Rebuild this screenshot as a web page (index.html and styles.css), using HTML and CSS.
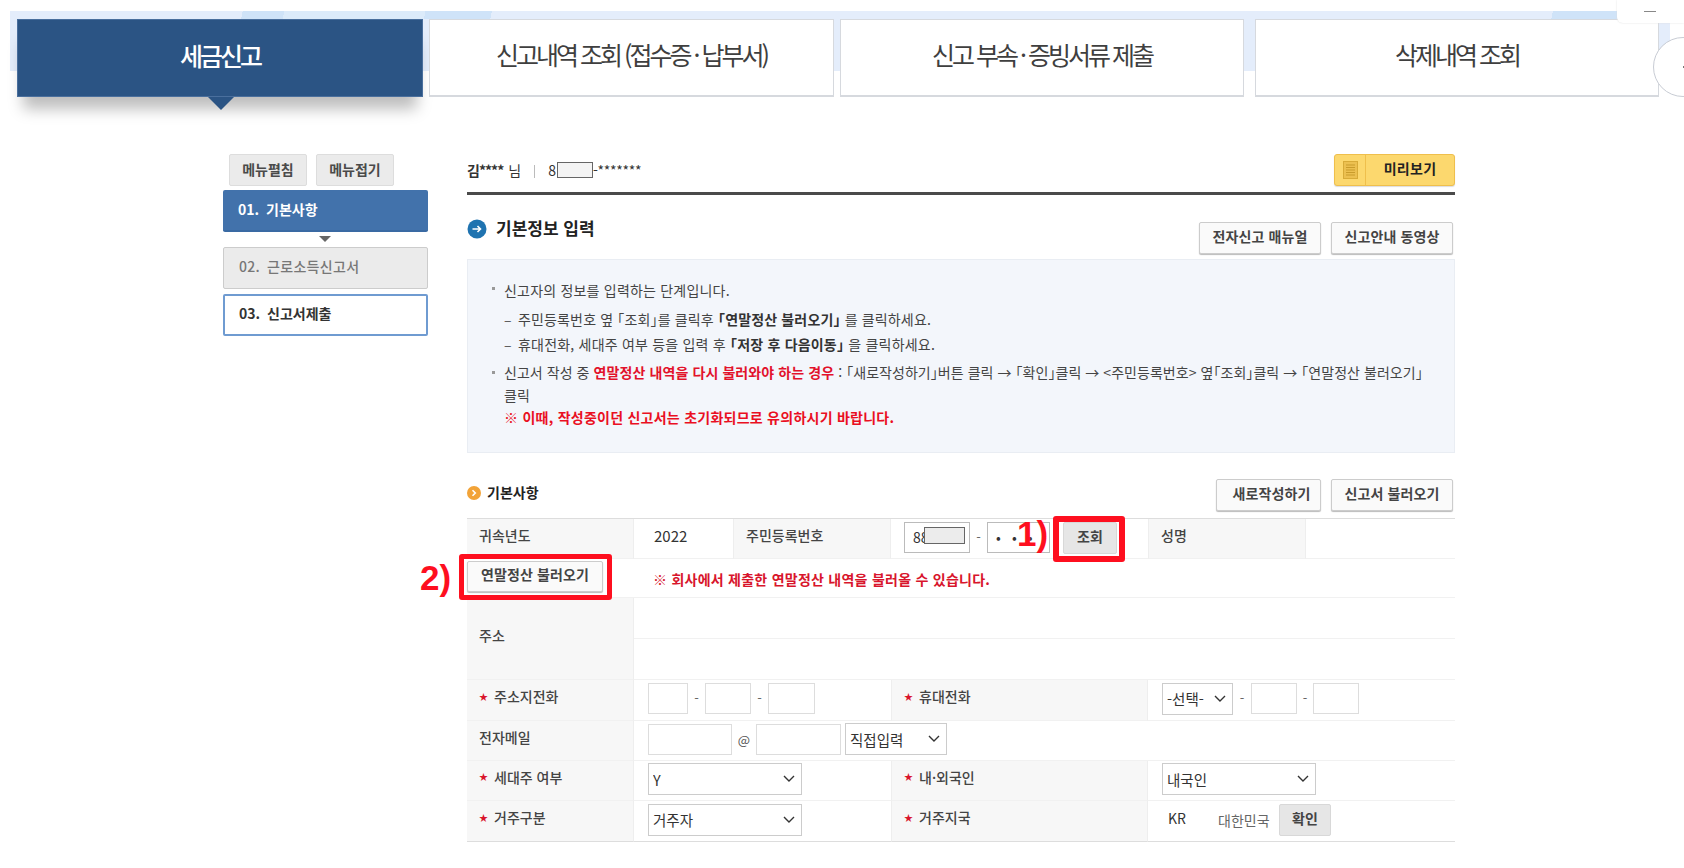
FILE: index.html
```html
<!DOCTYPE html>
<html lang="ko">
<head>
<meta charset="utf-8">
<title>세금신고</title>
<link rel="stylesheet" href="styles.css">
</head>
<body>
<div class="page">
  <div class="float-min"><span class="min-bar"></span></div>
  <div class="float-circle"><span class="circle-dot"></span></div>
  <nav class="tabs">
    <a class="tab tab-active">세금신고</a>
    <a class="tab tab-two">신고내역 조회 (접수증 · 납부서)</a>
    <a class="tab tab-three">신고 부속 · 증빙서류 제출</a>
    <a class="tab tab-four">삭제내역 조회</a>
  </nav>
  <div class="content">
    <aside class="side">
      <div class="side-btns">
        <button class="side-btn">메뉴펼침</button>
        <button class="side-btn">메뉴접기</button>
      </div>
      <div class="step step-on"><span class="num">01.</span>기본사항</div>
      <div class="step-arrow"></div>
      <div class="step step-off"><span class="num">02.</span>근로소득신고서</div>
      <div class="step step-next"><span class="num">03.</span>신고서제출</div>
    </aside>
    <main class="main">
      <div class="user-row">
        <div class="user">
          <b>김****</b><span class="user-nim">님</span><span class="user-sep"></span><span>8</span><span class="mask mask-user"></span><span class="user-stars">-*******</span>
        </div>
        <button class="preview">
          <span class="preview-icon">
            <svg width="15" height="18" viewBox="0 0 15 18"><rect x="0.5" y="0.5" width="14" height="17" fill="#ecc050" stroke="#d8ab38"/><path d="M3 4h9M3 6.5h9M3 9h9M3 11.5h9M3 14h9" stroke="#c99c2c" stroke-width="1"/></svg>
          </span>
          <span class="preview-text">미리보기</span>
        </button>
      </div>
      <div class="head-row">
        <h2 class="head">
          <svg class="head-icon" width="20" height="20" viewBox="0 0 20 20"><circle cx="10" cy="10" r="9.5" fill="#1f73b0"/><path d="M5.5 10h8M10.5 7l3 3-3 3" fill="none" stroke="#fff" stroke-width="1.6"/></svg>
          <span class="head-text">기본정보 입력</span>
        </h2>
        <div class="btn-group">
          <button class="btn">전자신고 매뉴얼</button>
          <button class="btn">신고안내 동영상</button>
        </div>
      </div>
      <section class="info">
        <p class="line"><span class="bullet"></span>신고자의 정보를 입력하는 단계입니다.</p>
        <p class="line line-dash line-second">주민등록번호 옆 ｢조회｣를 클릭후 <b>｢연말정산 불러오기｣</b> 를 클릭하세요.</p>
        <p class="line line-dash line-third">휴대전화, 세대주 여부 등을 입력 후 <b>｢저장 후 다음이동｣</b> 을 클릭하세요.</p>
        <p class="line line-tight"><span class="bullet"></span>신고서 작성 중 <b class="red">연말정산 내역을 다시 불러와야 하는 경우</b> : ｢새로작성하기｣버튼 클릭 → ｢확인｣클릭 → &lt;주민등록번호&gt; 옆｢조회｣클릭 → ｢연말정산 불러오기｣<br>클릭<br><b class="red-bright">※ 이때, 작성중이던 신고서는 초기화되므로 유의하시기 바랍니다.</b></p>
      </section>
      <div class="sub-row">
        <h3 class="sub">
          <svg class="sub-icon" width="14" height="14" viewBox="0 0 14 14"><circle cx="7" cy="7" r="7" fill="#f2a338"/><path d="M5.5 4.2 8.3 7l-2.8 2.8" fill="none" stroke="#fff" stroke-width="1.6"/></svg>
          <span class="sub-text">기본사항</span>
        </h3>
        <div class="btn-group">
          <button class="btn btn-narrow">새로작성하기</button>
          <button class="btn">신고서 불러오기</button>
        </div>
      </div>
      <div class="form">
        <div class="cell label">귀속년도</div>
        <div class="cell val-year">2022</div>
        <div class="cell label label-in">주민등록번호</div>
        <div class="cell val val-rrn">
          <div class="field f-rrn1">88<span class="mask mask-rrn"></span></div>
          <span class="dash d17">-</span>
          <div class="field f-rrn2">• • •</div>
          <button class="btn-gray btn-lookup">조회</button>
        </div>
        <div class="cell label label-in">성명</div>
        <div class="cell"></div>

        <div class="cell cell-load"><button class="btn btn-load">연말정산 불러오기</button></div>
        <div class="cell span5 val-note"><b>※ 회사에서 제출한 연말정산 내역을 불러올 수 있습니다.</b></div>

        <div class="cell label label-addr">주소</div>
        <div class="cell span5"></div>
        <div class="cell span5"></div>

        <div class="cell label"><span class="star">★</span>주소지전화</div>
        <div class="cell val span2">
          <input class="input w40"><span class="dash d17">-</span><input class="input w46"><span class="dash d17">-</span><input class="input w47">
        </div>
        <div class="cell label label-in"><span class="star">★</span>휴대전화</div>
        <div class="cell val span2">
          <select class="select w71"><option>-선택-</option></select><span class="dash d18">-</span><input class="input w46"><span class="dash d16">-</span><input class="input w46">
        </div>

        <div class="cell label">전자메일</div>
        <div class="cell val span5">
          <input class="input w84"><span class="at">@</span><input class="input w85"><select class="select w102"><option>직접입력</option></select>
        </div>

        <div class="cell label"><span class="star">★</span>세대주 여부</div>
        <div class="cell val span2"><select class="select w154"><option>Y</option></select></div>
        <div class="cell label label-in"><span class="star">★</span>내·외국인</div>
        <div class="cell val span2"><select class="select w154"><option>내국인</option></select></div>

        <div class="cell label last"><span class="star">★</span>거주구분</div>
        <div class="cell val span2 last"><select class="select w154"><option>거주자</option></select></div>
        <div class="cell label label-in last"><span class="star">★</span>거주지국</div>
        <div class="cell val span2 last">
          <span class="code">KR</span><span class="country">대한민국</span><button class="btn-gray btn-ok">확인</button>
        </div>

        <div class="mark mark-one"></div>
        <div class="mark mark-two"></div>
        <div class="mark-label mark-label-one">1)</div>
        <div class="mark-label mark-label-two">2)</div>
      </div>
    </main>
  </div>
</div>
</body>
</html>
```

FILE: styles.css
```css
* { box-sizing: border-box; }
html, body { margin: 0; padding: 0; background: #fff; }
body { font-family: "Noto Sans CJK KR", "Noto Sans", sans-serif; font-size: 14px; color: #444; }
button, input, select { font-family: inherit; margin: 0; }
h2, h3, p { margin: 0; }

.page { position: relative; width: 1684px; height: 868px; overflow: hidden; }

.float-min { position: absolute; z-index: 3; top: 0; right: 0; width: 67px; height: 23px; background: #fff; border-bottom-left-radius: 6px; box-shadow: 0 0 2px #ddd; }
.min-bar { position: absolute; left: 27px; top: 11px; width: 12px; height: 1px; background: #888; }
.float-circle { position: absolute; z-index: 3; left: 1653px; top: 37px; width: 60px; height: 60px; border-radius: 50%; background: #fff; border: 1px solid #c8ccd4; }
.circle-dot { position: absolute; left: 29px; top: 28px; width: 2px; height: 2px; background: #777; }

.tabs {
  display: flex; gap: 7px; width: 1660px; height: 86px; margin: 11px 0 0 10px; padding: 8px 0 0 7px;
  background:
    linear-gradient(100deg, transparent 0 14%, #cfe3f8 14% 16.5%, #dcebfa 16.5% 25%, #cfe3f8 25% 29%, transparent 29%) 0 0 / 100% 8px no-repeat,
    linear-gradient(100deg, transparent 0 92.8%, #cfe3f8 92.8% 97%, transparent 97%) 0 0 / 100% 14px no-repeat,
    linear-gradient(#e4edfb, #e4edfb) 0 0 / 100% 60px no-repeat;
}
.tab {
  display: flex; align-items: center; justify-content: center; height: 78px; width: 404px; padding-bottom: 7px;
  background: #fff; border: 1px solid #d6d9de; border-bottom-width: 2px;
  font-size: 25px; letter-spacing: -3px; color: #3f3f3f; white-space: nowrap;
}
.tab-active { position: relative; width: 406px; background: #2b5484; border: 1px solid #4a6f9d; color: #fff; font-weight: 500; box-shadow: 0 18px 14px -6px rgba(0,0,0,.26); }
.tab-active::after { content: ""; position: absolute; left: 190px; top: 77px; border: 13px solid transparent; border-top-color: #2b5484; border-bottom-width: 0; }
.tab-two { position: relative; width: 405px; margin-left: -1px; }
.tab-three { margin-left: -1px; }
.tab-four { margin-left: 4px; }

.content { display: flex; gap: 39px; margin-top: 57px; padding-left: 223px; }

.side { width: 205px; }
.side-btns { display: flex; gap: 9px; padding-left: 6px; margin-bottom: 4px; }
.side-btn { width: 78px; height: 32px; padding: 0 0 3px; background: #ebebeb; border: 1px solid #ddd; border-radius: 2px; font-size: 14px; font-weight: 700; color: #4a4a4a; }
.step { display: flex; align-items: center; height: 42px; padding-left: 15px; border-radius: 2px; font-size: 14px; font-weight: 700; padding-bottom: 4px; }
.num { margin-right: 7px; }
.step-on { background: #4272ab; color: #fff; border-bottom: 2px solid #3a6aa3; padding-bottom: 2px; }
.step-arrow { position: relative; height: 15px; }
.step-arrow::after { content: ""; position: absolute; left: 96px; top: 4px; border: 6px solid transparent; border-top: 6px solid #666; border-bottom-width: 0; }
.step-off { background: #ebebeb; border: 1px solid #ccc; color: #777; font-weight: 500; margin-bottom: 5px; letter-spacing: .3px; }
.step-next { background: #fff; border: 2px solid #6f9bd1; color: #333; padding-left: 14px; }

.main { width: 988px; }
.user-row { display: flex; justify-content: space-between; align-items: flex-start; height: 41px; border-bottom: 3px solid #4a4a4a; }
.user { display: flex; align-items: center; height: 32px; font-size: 14px; color: #333; }
.user b { font-weight: 700; letter-spacing: -1px; }
.user-nim { margin-left: 5px; }
.user-sep { width: 1px; height: 13px; margin: 2px 13px 0 13px; background: #bbb; }
.mask { display: inline-block; background: #ececec; border: 1px solid #666; }
.mask-user { width: 36px; height: 16px; background: #f4f4f4; margin-left: 1px; }
.user-stars { letter-spacing: -.3px; }
.preview { display: flex; width: 121px; height: 32px; padding: 0; background: #fcd86e; border: 1px solid #efbf4c; border-radius: 3px; box-shadow: 0 1px 1px #ddd; }
.preview-icon { display: flex; align-items: center; justify-content: center; width: 31px; height: 30px; border-right: 1px solid #efbf4c; }
.preview-text { flex: 1; line-height: 27px; font-size: 14px; font-weight: 700; color: #222; padding-left: 0; letter-spacing: .3px; }

.head-row { display: flex; justify-content: space-between; height: 64px; padding: 27px 2px 0 0; }
.head { display: flex; align-items: center; height: 20px; font-size: 17px; font-weight: 700; color: #222; margin-top: -3px; white-space: nowrap; }
.head-icon { margin-right: 9px; }
.head-text { padding-bottom: 4px; }
.btn-group { display: flex; gap: 10px; }
.btn { width: 122px; height: 32px; padding: 0 0 5px; background: #fafafa; border: 1px solid #ccc; border-radius: 2px; box-shadow: 0 1px 1px #bbb; font-size: 14px; font-weight: 700; color: #444; letter-spacing: .1px; }
.btn-narrow { width: 105px; padding-left: 6px; }

.info { height: 194px; padding: 17px 0 0 36px; background: #f3f6fb; border: 1px solid #e9edf3; font-size: 14px; color: #444; }
.line { position: relative; line-height: 26px; white-space: nowrap; letter-spacing: .2px; }
.line b { font-weight: 700; color: #333; }
.line-second { margin-top: 3px; letter-spacing: .15px; }
.line-third { margin-top: -1px; }
.line-dash { padding-left: 14px; }
.line-dash::before { content: "–"; position: absolute; left: 0; color: #555; }
.line-tight { line-height: 22.5px; margin-top: 4px; letter-spacing: .05px; }
.bullet { position: absolute; left: -12px; top: 10px; width: 3px; height: 3px; background: #999; }
.line .red { color: #e2122b; letter-spacing: .1px; }
.line .red-bright { color: #ea0f22; letter-spacing: .25px; }

.sub-row { display: flex; justify-content: space-between; height: 65px; padding: 26px 2px 0 0; }
.sub { display: flex; align-items: center; height: 28px; font-size: 14px; font-weight: 700; color: #222; }
.sub-icon { margin-right: 6px; }
.sub-text { padding-bottom: 2px; }

.form {
  position: relative; display: grid;
  grid-template-columns: 167px 99px 158px 257px 158px 149px;
  grid-template-rows: 40px 39px 41px 41px 41px 40px 40px 41px;
  border-top: 1px solid #ddd;
}
.cell { display: flex; align-items: center; min-width: 0; border-bottom: 1px solid #f1f1f1; }
.last { border-bottom: 1px solid #ddd; }
.span2 { grid-column: span 2; }
.span5 { grid-column: span 5; }
.label { padding: 0 0 8px 12px; background: #f7f7f7; border-right: 1px solid #eee; font-size: 14px; font-weight: 500; color: #444; white-space: nowrap; }
.label-in { padding-left: 12px; border-left: 1px solid #eee; }
.label-addr { grid-row: span 2; }
.star { display: inline-block; width: 15px; font-size: 9px; color: #d9152c; }
.val { padding: 0 0 3px 14px; }
.val-year { padding: 0 0 6px 20px; font-size: 15px; color: #333; }
.val-rrn { padding-left: 13px; padding-bottom: 2px; }
.cell-load { background: #fff; }
.btn-load { width: 136px; height: 31px; margin-top: -3px; padding-bottom: 5px; }
.val-note { padding: 2px 0 0 19px; color: #d8152c; font-size: 14px; letter-spacing: .25px; }
.val-note b { font-weight: 700; }

.field { position: relative; height: 31px; line-height: 28px; background: #fff; border: 1px solid #bbb; font-size: 14px; color: #333; }
.f-rrn1 { width: 66px; padding-left: 8px; }
.f-rrn2 { width: 63px; padding-left: 8px; letter-spacing: 4px; white-space: nowrap; overflow: hidden; }
.mask-rrn { position: absolute; left: 19px; top: 4px; width: 41px; height: 17px; }
.dash { text-align: center; color: #666; font-size: 13px; padding-bottom: 2px; }
.d16 { width: 16px; } .d17 { width: 17px; } .d18 { width: 18px; }
.at { width: 24px; text-align: center; color: #555; font-size: 13px; }

.input { height: 31px; padding: 0; background: #fff; border: 1px solid #ddd; border-radius: 0; }
.select {
  height: 32px; padding: 0 0 0 4px; background: #fff url("data:image/svg+xml,%3Csvg xmlns='http://www.w3.org/2000/svg' width='12' height='8'%3E%3Cpath d='M1 1l5 5 5-5' fill='none' stroke='%23333' stroke-width='1.4'/%3E%3C/svg%3E") no-repeat right 6px center;
  border: 1px solid #ccc; border-radius: 0; appearance: none; font-size: 14.5px; color: #333;
}
.w40 { width: 40px; } .w46 { width: 46px; } .w47 { width: 47px; } .w71 { width: 71px; } .w84 { width: 84px; } .w85 { width: 85px; margin-right: 4px; } .w102 { width: 102px; } .w154 { width: 154px; }

.btn-gray { height: 32px; padding: 0 0 3px; background: #e6e6e6; border: 1px solid #d8d8d8; border-radius: 2px; font-size: 14px; font-weight: 700; color: #444; }
.btn-lookup { width: 54px; margin-left: 13px; }
.btn-ok { width: 52px; }
.code { width: 50px; padding: 0 0 3px 7px; margin-left: -1px; font-size: 14px; color: #333; }
.country { width: 68px; padding-left: 7px; font-size: 14px; color: #666; white-space: nowrap; }

.mark { position: absolute; border: 6px solid #fe0f1f; border-radius: 3px; }
.mark-one { left: 586px; top: -3px; width: 72px; height: 46px; }
.mark-two { left: -8px; top: 35px; width: 153px; height: 46px; border-width: 5px; }
.mark-label { position: absolute; font-family: "Liberation Sans", sans-serif; font-size: 35px; font-weight: 700; line-height: 40px; color: #fe0f1f; }
.mark-label-one { left: 550px; top: -5px; }
.mark-label-two { left: -47px; top: 39px; }
```
